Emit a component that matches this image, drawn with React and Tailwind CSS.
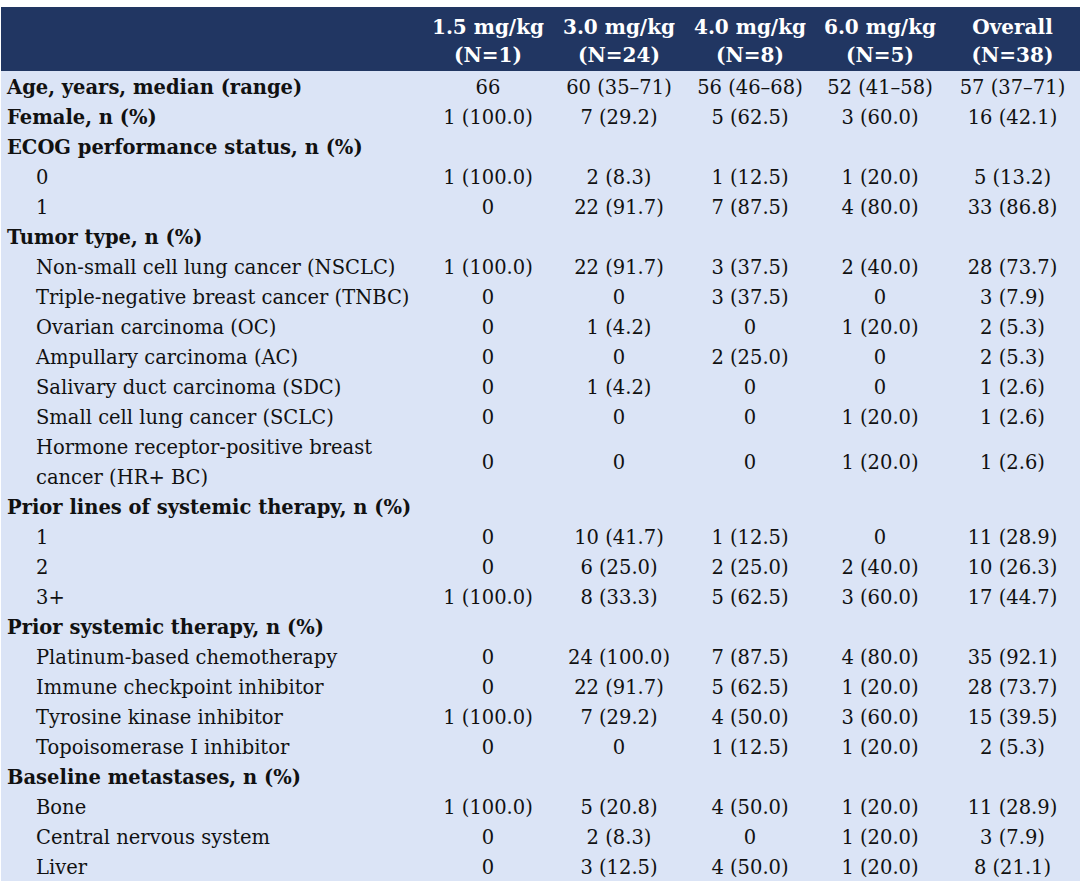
const cols = ['1.5 mg/kg|(N=1)', '3.0 mg/kg|(N=24)', '4.0 mg/kg|(N=8)', '6.0 mg/kg|(N=5)', 'Overall|(N=38)']

const rows = [
  { label: 'Age, years, median (range)', head: true, v: ['66', '60 (35–71)', '56 (46–68)', '52 (41–58)', '57 (37–71)'] },
  { label: 'Female, n (%)', head: true, v: ['1 (100.0)', '7 (29.2)', '5 (62.5)', '3 (60.0)', '16 (42.1)'] },
  { label: 'ECOG performance status, n (%)', head: true },
  { label: '0', v: ['1 (100.0)', '2 (8.3)', '1 (12.5)', '1 (20.0)', '5 (13.2)'] },
  { label: '1', v: ['0', '22 (91.7)', '7 (87.5)', '4 (80.0)', '33 (86.8)'] },
  { label: 'Tumor type, n (%)', head: true },
  { label: 'Non-small cell lung cancer (NSCLC)', v: ['1 (100.0)', '22 (91.7)', '3 (37.5)', '2 (40.0)', '28 (73.7)'] },
  { label: 'Triple-negative breast cancer (TNBC)', v: ['0', '0', '3 (37.5)', '0', '3 (7.9)'] },
  { label: 'Ovarian carcinoma (OC)', v: ['0', '1 (4.2)', '0', '1 (20.0)', '2 (5.3)'] },
  { label: 'Ampullary carcinoma (AC)', v: ['0', '0', '2 (25.0)', '0', '2 (5.3)'] },
  { label: 'Salivary duct carcinoma (SDC)', v: ['0', '1 (4.2)', '0', '0', '1 (2.6)'] },
  { label: 'Small cell lung cancer (SCLC)', v: ['0', '0', '0', '1 (20.0)', '1 (2.6)'] },
  { label: 'Hormone receptor-positive breast|cancer (HR+ BC)', v: ['0', '0', '0', '1 (20.0)', '1 (2.6)'] },
  { label: 'Prior lines of systemic therapy, n (%)', head: true },
  { label: '1', v: ['0', '10 (41.7)', '1 (12.5)', '0', '11 (28.9)'] },
  { label: '2', v: ['0', '6 (25.0)', '2 (25.0)', '2 (40.0)', '10 (26.3)'] },
  { label: '3+', v: ['1 (100.0)', '8 (33.3)', '5 (62.5)', '3 (60.0)', '17 (44.7)'] },
  { label: 'Prior systemic therapy, n (%)', head: true },
  { label: 'Platinum-based chemotherapy', v: ['0', '24 (100.0)', '7 (87.5)', '4 (80.0)', '35 (92.1)'] },
  { label: 'Immune checkpoint inhibitor', v: ['0', '22 (91.7)', '5 (62.5)', '1 (20.0)', '28 (73.7)'] },
  { label: 'Tyrosine kinase inhibitor', v: ['1 (100.0)', '7 (29.2)', '4 (50.0)', '3 (60.0)', '15 (39.5)'] },
  { label: 'Topoisomerase I inhibitor', v: ['0', '0', '1 (12.5)', '1 (20.0)', '2 (5.3)'] },
  { label: 'Baseline metastases, n (%)', head: true },
  { label: 'Bone', v: ['1 (100.0)', '5 (20.8)', '4 (50.0)', '1 (20.0)', '11 (28.9)'] },
  { label: 'Central nervous system', v: ['0', '2 (8.3)', '0', '1 (20.0)', '3 (7.9)'] },
  { label: 'Liver', v: ['0', '3 (12.5)', '4 (50.0)', '1 (20.0)', '8 (21.1)'] },
]

const grid = 'grid grid-cols-[422px_130px_132px_130px_130px_1fr]'

export default function App() {
  return (
    <div className="w-[1080px] h-[896px] bg-white pt-[7px] pl-px text-[19.5px] leading-[30px] text-[#111111]" style={{ fontFamily: '"DejaVu Serif", "Liberation Serif", serif' }}>
      {/* header */}
      <div className={`${grid} bg-[#213662] text-white font-bold text-[20px] h-[64px] items-center`}>
        <div />
        {cols.map((c, i) => (
          <div key={i} className="text-center leading-[28px] translate-y-[2px]">
            {c.split('|').map((t, j) => <div key={j}>{t}</div>)}
          </div>
        ))}
      </div>

      <div className="bg-[#dbe4f6]">
        {rows.map((r, i) => (
          <div key={i} className={`${grid} items-center`}>
            <div className={`translate-y-[2px] whitespace-nowrap ${r.head ? 'pl-[6px] font-bold' : 'pl-[35px]'}`}>
              {r.label.split('|').map((t, j) => <div key={j}>{t}</div>)}
            </div>
            {(r.v || ['', '', '', '', '']).map((v, j) => (
              <div key={j} className="text-center whitespace-nowrap translate-y-[2px]">{v}</div>
            ))}
          </div>
        ))}
      </div>
    </div>
  )
}
